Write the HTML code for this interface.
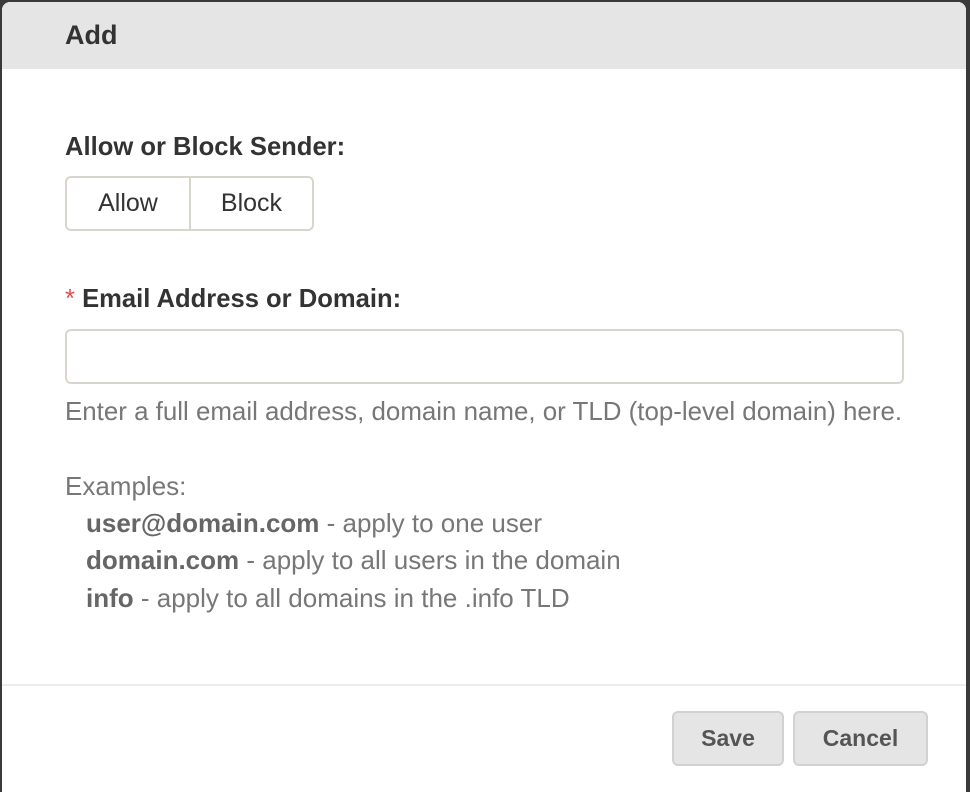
<!DOCTYPE html>
<html><head><meta charset="utf-8"><style>
body{margin:0;width:970px;height:786px;background:#3a3a3a;position:relative;overflow:hidden;font-family:"Liberation Sans",Arial,sans-serif}
.dlg{position:absolute;left:2px;top:2px;width:964px;height:790px;background:#fff;border-radius:8px 8px 0 0;overflow:hidden}
.hd{position:absolute;left:0;top:0;width:100%;height:67px;background:#e5e5e5}
.t{position:absolute;white-space:nowrap;line-height:1.15}
.b{font-weight:bold;color:#333}
.g{color:#777;font-size:26px}
.seg{position:absolute;left:63px;top:174px;width:249px;height:55px;border:2px solid #d8d6cc;border-radius:6px;box-sizing:border-box;display:flex}
.seg div{display:flex;align-items:center;justify-content:center;font-size:25px;color:#333}
.inp{position:absolute;left:63px;top:327px;width:839px;height:55px;border:2px solid #d8d6cc;border-radius:6px;box-sizing:border-box}
.line{position:absolute;left:0;top:682px;width:100%;height:2px;background:#ececec}
.btn{position:absolute;top:709px;height:55px;background:#e5e5e5;border:2px solid #d2d2d2;border-radius:6px;box-sizing:border-box;display:flex;align-items:center;justify-content:center;font-weight:bold;font-size:23px;color:#555}
</style></head><body>
<div class="dlg">
<div class="hd"></div>
<div class="t b" style="left:63px;top:18px;font-size:27px">Add</div>
<div class="t b" style="left:63px;top:131px;font-size:25.6px">Allow or Block Sender:</div>
<div class="seg"><div style="width:122px;border-right:2px solid #d8d6cc">Allow</div><div style="flex:1">Block</div></div>
<div class="t b" style="left:63px;top:283px;font-size:25.6px"><span style="color:#e05050;font-weight:normal">*</span> Email Address or Domain:</div>
<div class="inp"></div>
<div class="t g" style="left:63px;top:396px;font-size:25.9px">Enter a full email address, domain name, or TLD (top-level domain) here.</div>
<div class="t g" style="left:63px;top:470px">Examples:</div>
<div class="t g" style="left:84px;top:507px"><b style="color:#666">user@domain.com</b> - apply to one user</div>
<div class="t g" style="left:84px;top:544px"><b style="color:#666">domain.com</b> - apply to all users in the domain</div>
<div class="t g" style="left:84px;top:582px"><b style="color:#666">info</b> - apply to all domains in the .info TLD</div>
<div class="line"></div>
<div class="btn" style="left:670px;width:112px">Save</div>
<div class="btn" style="left:791px;width:135px">Cancel</div>
</div>
</body></html>
